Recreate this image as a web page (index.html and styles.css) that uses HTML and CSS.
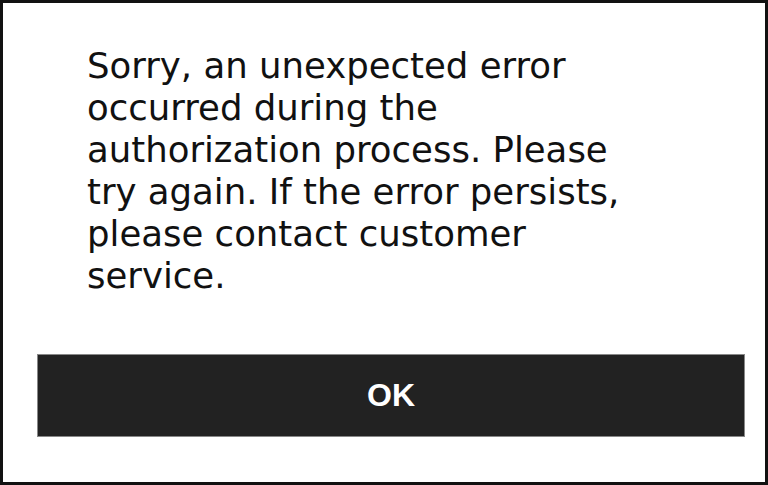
FILE: index.html
```html
<!DOCTYPE html>
<html lang="en">
<head>
  <meta charset="UTF-8" />
  <meta name="viewport" content="width=device-width, initial-scale=1.0"/>
  <title>Error</title>
  <link rel="stylesheet" href="styles.css">
</head>
<body>

<!-- Error dialog -->
<div class="dialog">
  <p class="message">Sorry, an unexpected error occurred during the authorization process. Please try again. If the error persists, please contact customer service.</p>
  <button class="btn">OK</button>
</div>

</body>
</html>
```

FILE: styles.css
```css
* {
  margin: 0;
  padding: 0;
  box-sizing: border-box;
}

body {
  background: white;
  width: 768px;
  height: 485px;
}

.dialog {
  width: 768px;
  height: 485px;
  border: 3px solid #111;
  display: flex;
  flex-direction: column;
  padding: 42px 0 0 34px;
}

.message {
  font-family: 'DejaVu Sans', Verdana, sans-serif;
  font-size: 35.5px;
  line-height: 42px;
  color: #111;
  margin-left: 50px;
  width: 560px;
}

.btn {
  margin-top: 57px;
  width: 708px;
  height: 83px;
  background-color: #222;
  border: 1px solid #888;
  color: white;
  font-family: 'Liberation Sans', Arial, sans-serif;
  font-weight: bold;
  font-size: 32px;
}
```
